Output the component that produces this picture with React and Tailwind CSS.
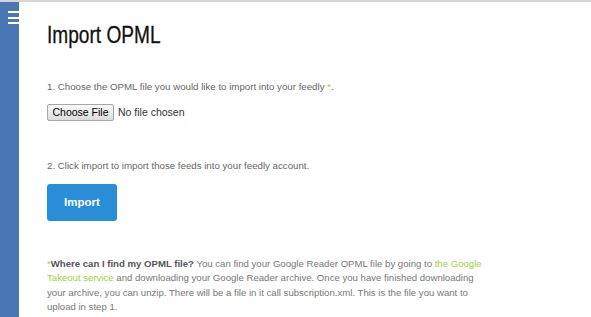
export default function App() {
  return (
    <div className="w-[591px] h-[317px] overflow-hidden bg-white flex flex-col font-['Liberation_Sans',Arial,sans-serif]">
      <div className="h-[2px] bg-[#d6d6d6] shrink-0" />
      <div className="flex flex-1 min-h-0">
        {/* Sidebar */}
        <div className="w-[19px] bg-[#4a76b6] shrink-0 flex flex-col items-end pt-[9px] gap-[3.5px]">
          <div className="w-[11px] h-[2px] bg-white" />
          <div className="w-[11px] h-[2px] bg-white" />
          <div className="w-[11px] h-[2px] bg-white" />
        </div>

        <div className="pl-[28px] pt-[19px]">
          <h1 className="inline-block origin-left scale-x-[0.83] text-[23px] leading-[28px] text-[#111] [-webkit-text-stroke:0.3px_#111]">
            Import OPML
          </h1>

          <p className="mt-[30px] text-[9.7px] leading-[14px] text-[#666]">
            1. Choose the OPML file you would like to import into your feedly{" "}
            <span className="text-[#9fd13a]">*</span>.
          </p>

          <div className="mt-[10px] flex items-center gap-[4px]">
            <button className="h-[17px] w-[67px] rounded-[2px] border border-[#a6a6a6] bg-gradient-to-b from-[#f8f8f8] to-[#dcdcdc] text-[10.5px] leading-[13px] text-black">
              Choose File
            </button>
            <span className="text-[10.5px] text-[#333]">No file chosen</span>
          </div>

          <p className="mt-[38px] text-[9.7px] leading-[14px] text-[#666]">
            2. Click import to import those feeds into your feedly account.
          </p>

          <button className="mt-[11px] w-[70px] h-[37px] rounded-[3px] bg-[#2a8dd8] text-white font-bold text-[11.5px]">
            Import
          </button>

          <p className="mt-[36px] w-[450px] text-[9.6px] leading-[14.3px] text-[#777]">
            <span className="text-[#9fd13a]">*</span>
            <span className="font-bold text-[#555]">Where can I find my OPML file?</span> You can find your Google
            Reader OPML file by going to <span className="text-[#9fd13a]">the Google</span>
            <br />
            <span className="text-[#9fd13a]">Takeout service</span> and downloading your Google Reader archive. Once
            you have finished downloading
            <br />
            your archive, you can unzip. There will be a file in it call subscription.xml. This is the file you want to
            <br />
            upload in step 1.
          </p>
        </div>
      </div>
    </div>
  );
}
